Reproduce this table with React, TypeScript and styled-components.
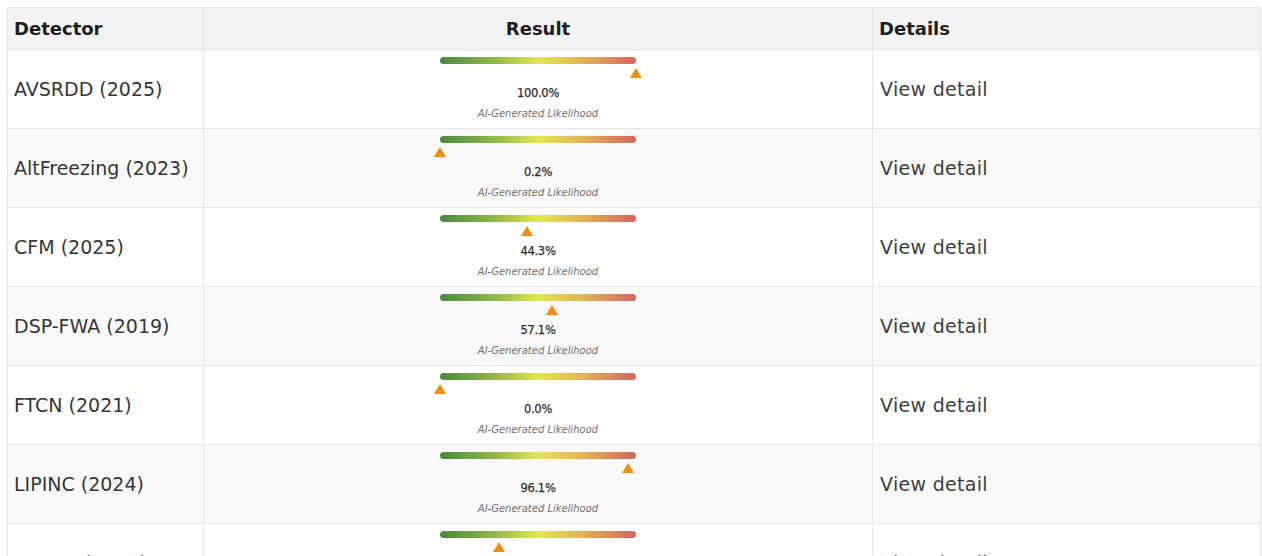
import React from "react";
import styled, { createGlobalStyle } from "styled-components";

const Global = createGlobalStyle`
  html, body { margin: 0; padding: 0; background: #ffffff; }
  body { font-family: "DejaVu Sans", "Open Sans", sans-serif; }
`;

const Wrapper = styled.div`
  padding: 7px 0 0 7px;
  height: 549px;
  overflow: hidden;
`;

const Table = styled.table`
  width: 1253px;
  border-collapse: collapse;
  table-layout: fixed;
`;

const HeadCell = styled.th<{ $align?: string; $w: number }>`
  width: ${(p) => p.$w}px;
  height: 42px;
  padding: 0 6px;
  background: #f3f3f3;
  border: 1px solid #e6e6e6;
  text-align: ${(p) => p.$align || "left"};
  font-size: 18px;
  font-weight: 700;
  color: #1e1e1e;
  box-sizing: border-box;
`;

const Row = styled.tr<{ $alt: boolean }>`
  background: ${(p) => (p.$alt ? "#f9f9f9" : "#ffffff")};
`;

const Cell = styled.td`
  height: 79px;
  padding: 0 6px;
  border: 1px solid #e6e6e6;
  font-size: 19px;
  color: #363636;
  vertical-align: middle;
  box-sizing: border-box;
`;

const DetailCell = styled(Cell)`
  padding: 0 7px;
  color: #3e3e3e;
  letter-spacing: 0.3px;
`;

const ResultCell = styled.td`
  height: 79px;
  padding: 7px 0 0;
  border: 1px solid #e6e6e6;
  vertical-align: top;
  box-sizing: border-box;
`;

const Gauge = styled.div`
  width: 196px;
  margin: 0 auto;
  display: flex;
  flex-direction: column;
  align-items: center;
`;

const Track = styled.div`
  width: 196px;
  height: 7px;
  border-radius: 4px;
  background: linear-gradient(
    to right,
    #4b8a3f 0%,
    #8fb84a 28%,
    #e3e651 50%,
    #e2b655 72%,
    #d5645f 100%
  );
`;

const MarkerLane = styled.div`
  position: relative;
  width: 196px;
  height: 16px;
`;

const Marker = styled.div`
  position: absolute;
  top: 4px;
  width: 0;
  height: 0;
  margin-left: -6px;
  border-left: 6px solid transparent;
  border-right: 6px solid transparent;
  border-bottom: 10px solid #ef8f0e;
`;

const Pct = styled.div`
  margin-top: 5px;
  font-size: 11.5px;
  line-height: 16px;
  font-weight: 400;
  color: #2e2e2e;
  letter-spacing: -0.3px;
  -webkit-text-stroke: 0.25px #2e2e2e;
`;

const Label = styled.div`
  margin-top: 6px;
  font-size: 10px;
  line-height: 13px;
  font-style: italic;
  color: #707070;
`;

const rows = [
  { name: "AVSRDD (2025)", pct: 100.0 },
  { name: "AltFreezing (2023)", pct: 0.2 },
  { name: "CFM (2025)", pct: 44.3 },
  { name: "DSP-FWA (2019)", pct: 57.1 },
  { name: "FTCN (2021)", pct: 0.0 },
  { name: "LIPINC (2024)", pct: 96.1 },
  { name: "RECCE (2022)", pct: 30.2 },
];

export default function App() {
  return (
    <Wrapper>
      <Global />
      <Table>
        <thead>
          <tr>
            <HeadCell $w={196}>Detector</HeadCell>
            <HeadCell $w={669} $align="center">Result</HeadCell>
            <HeadCell $w={388}>Details</HeadCell>
          </tr>
        </thead>
        <tbody>
          {rows.map((r, i) => (
            <Row key={r.name} $alt={i % 2 === 1}>
              <Cell>{r.name}</Cell>
              <ResultCell>
                <Gauge>
                  <Track />
                  <MarkerLane>
                    <Marker style={{ left: `${r.pct}%` }} />
                  </MarkerLane>
                  <Pct>{r.pct.toFixed(1)}%</Pct>
                  <Label>AI-Generated Likelihood</Label>
                </Gauge>
              </ResultCell>
              <DetailCell>View detail</DetailCell>
            </Row>
          ))}
        </tbody>
      </Table>
    </Wrapper>
  );
}
